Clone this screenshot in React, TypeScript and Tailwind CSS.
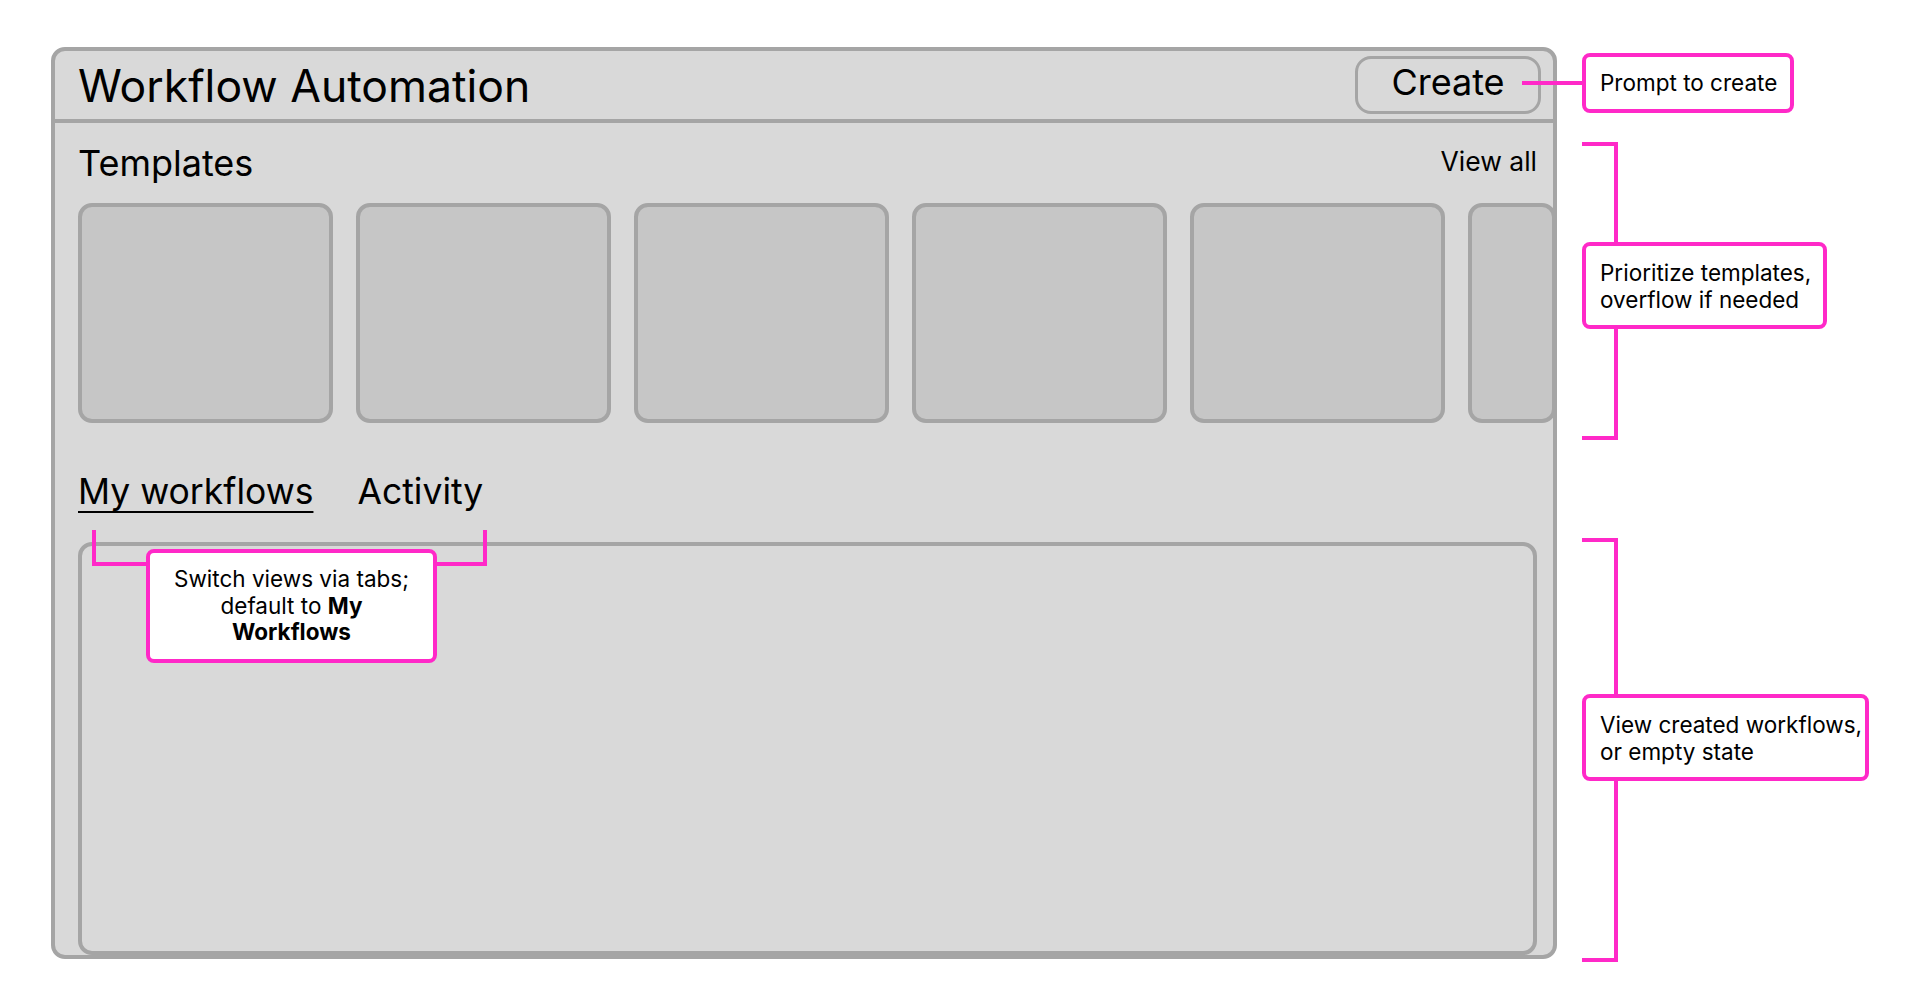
import React from 'react';

const templates = [1, 2, 3, 4, 5];

function Bracket({
  topClass,
  bottomClass,
  boxClass,
  lines,
}: {
  topClass: string;
  bottomClass: string;
  boxClass: string;
  lines: string[];
}) {
  return (
    <div className="flex flex-col">
      <div className={`w-[36px] border-t-4 border-r-4 border-[#ff29c8] ${topClass}`} />
      <div
        className={`flex h-[87px] flex-col justify-center rounded-[8px] border-4 border-[#ff29c8] bg-white pl-[14px] text-[22.5px] leading-[27px] ${boxClass}`}
      >
        {lines.map((l) => (
          <div key={l}>{l}</div>
        ))}
      </div>
      <div className={`w-[36px] border-r-4 border-b-4 border-[#ff29c8] ${bottomClass}`} />
    </div>
  );
}

function Frame() {
  return (
    <div className="flex h-[912px] w-[1506px] shrink-0 flex-col overflow-hidden rounded-[14px] border-4 border-[#a5a5a5] bg-[#d9d9d9]">
      <header className="flex h-[72px] shrink-0 items-center justify-between border-b-4 border-[#a5a5a5] pl-[23px] pr-[12px]">
        <h1 className="mt-[3px] text-[44.5px] leading-none font-normal">Workflow Automation</h1>
        <button className="h-[58px] w-[186px] rounded-[16px] border-[3px] border-[#a5a5a5] pb-[6px] text-[36px] leading-none">
          Create
        </button>
      </header>

      <div className="flex min-h-0 flex-1 flex-col pt-[20px] pr-[16px] pl-[23px]">
        <div className="flex items-start justify-between">
          <h2 className="text-[36px] leading-[40px] font-normal">Templates</h2>
          <span className="mt-[2px] text-[26.5px] leading-[32px]">View all</span>
        </div>

        {/* last card peeks in at the edge to hint at overflow */}
        <div className="mt-[20px] -mr-[19px] flex gap-[23px]">
          {templates.map((t) => (
            <div
              key={t}
              className="h-[220px] w-[255px] shrink-0 rounded-[14px] border-4 border-[#a5a5a5] bg-[#c6c6c6]"
            />
          ))}
          <div className="h-[220px] min-w-0 flex-1 rounded-[14px] border-4 border-[#a5a5a5] bg-[#c6c6c6]" />
        </div>

        <div className="mt-[48px] flex gap-[44px] text-[35.5px] leading-[42px]">
          <span className="underline decoration-2 underline-offset-[7px]">My workflows</span>
          <span>Activity</span>
        </div>

        <div className="mt-[29px] flex-1 rounded-[14px] border-4 border-[#a5a5a5]" />
      </div>
    </div>
  );
}

export default function App() {
  return (
    <div className="relative min-h-screen w-full bg-white font-[Inter,sans-serif] text-black">
      <div className="flex items-start gap-[25px] pt-[47px] pl-[51px]">
        <Frame />

        <div className="flex shrink-0 flex-col pt-[6px]">
          <div className="flex h-[60px] w-[212px] items-center rounded-[8px] border-4 border-[#ff29c8] bg-white pl-[14px] text-[22.5px]">
            Prompt to create
          </div>

          <div className="mt-[29px]">
            <Bracket
              topClass="h-[100px]"
              bottomClass="h-[111px]"
              boxClass="w-[245px]"
              lines={['Prioritize templates,', 'overflow if needed']}
            />
          </div>

          <div className="mt-[98px]">
            <Bracket
              topClass="h-[156px]"
              bottomClass="h-[181px]"
              boxClass="w-[287px]"
              lines={['View created workflows,', 'or empty state']}
            />
          </div>
        </div>
      </div>

      {/* connector from Create button to its note */}
      <div className="absolute top-[81px] left-[1522px] h-[4px] w-[61px] bg-[#ff29c8]" />

      {/* tabs callout */}
      <div className="absolute top-[530px] left-[92px] h-[36px] w-[395px] border-x-4 border-b-4 border-[#ff29c8]" />
      <div className="absolute top-[549px] left-[146px] flex h-[114px] w-[291px] flex-col items-center justify-center rounded-[8px] border-4 border-[#ff29c8] bg-white text-center text-[22.5px] leading-[26.5px]">
        <div>Switch views via tabs;</div>
        <div>
          default to <b className="font-bold">My</b>
        </div>
        <div>
          <b className="font-bold">Workflows</b>
        </div>
      </div>
    </div>
  );
}
